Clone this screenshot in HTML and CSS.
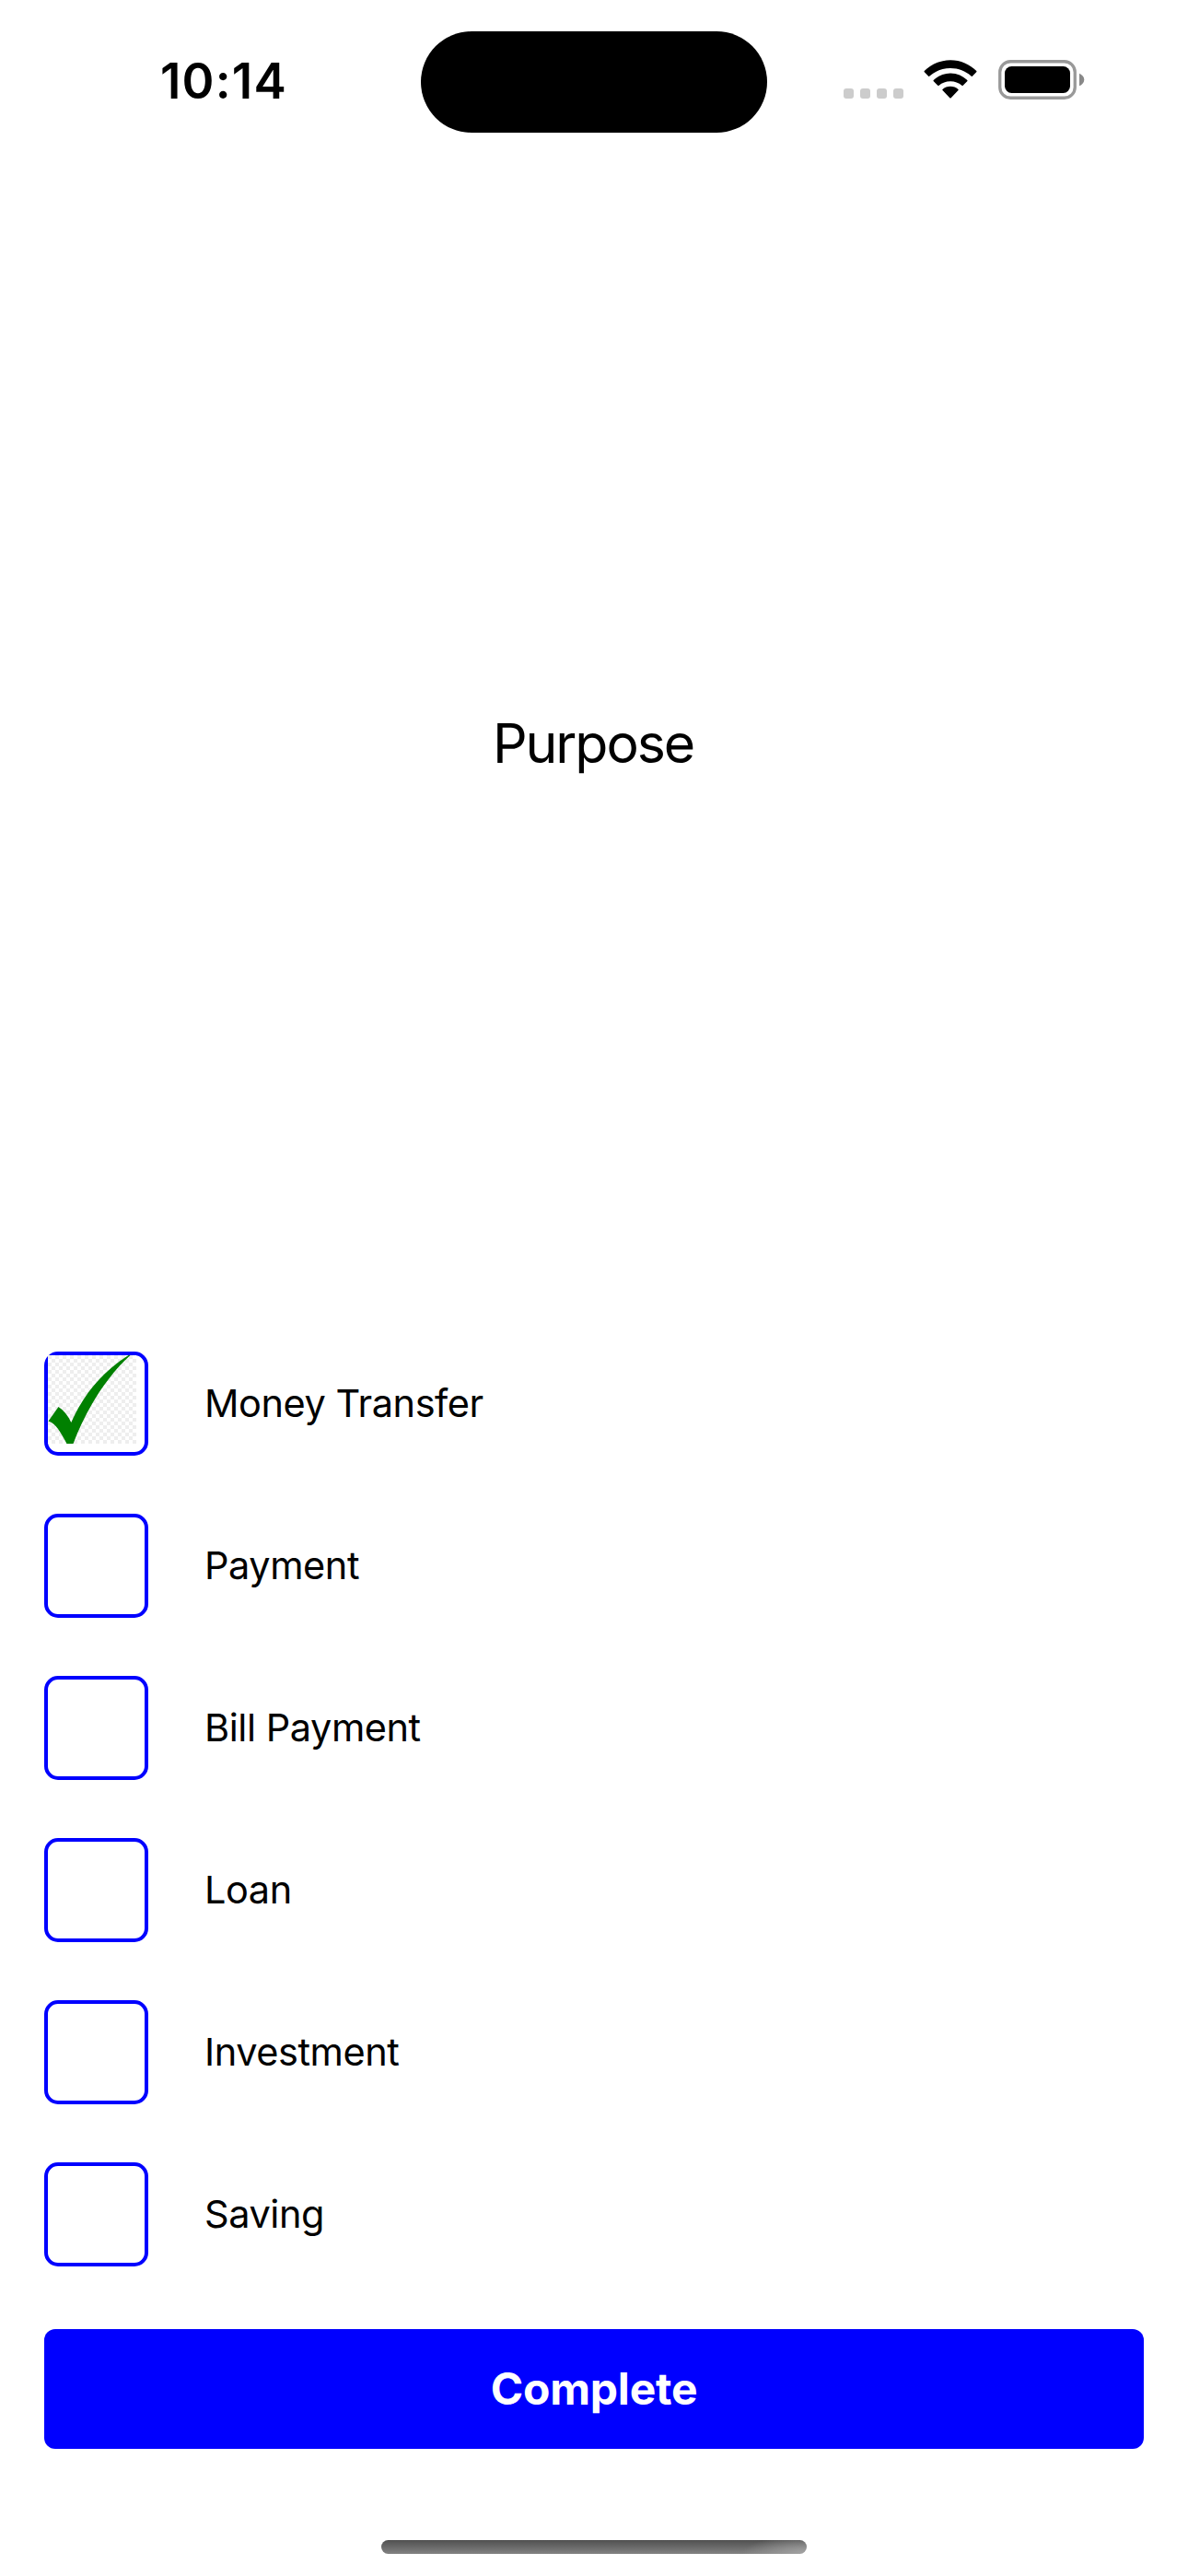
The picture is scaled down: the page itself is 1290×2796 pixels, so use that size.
FILE: index.html
```html
<!DOCTYPE html>
<html lang="en">
<head>
<meta charset="utf-8">
<title>Purpose</title>
<link rel="stylesheet" href="styles.css">
</head>
<body>
<div class="screen">
  <header class="status">
    <div class="time">10:14</div>
    <div class="island"></div>
    <div class="indicators">
      <div class="signal"><i></i><i></i><i></i><i></i></div>
      <svg class="wifi" width="58" height="43" viewBox="0 0 58 43">
        <path d="M29 0.2C40 0.2 50.200 4.800 57.300 12Q57.800 12.700 57.200 13.300L52.800 17.700Q52.200 18.200 51.500 17.600C45.500 12 37.800 9 29 9S12.500 12 6.500 17.600Q5.800 18.200 5.200 17.700L0.800 13.300Q0.200 12.700 0.700 12C7.800 4.800 18 0.200 29 0.200Z"/>
        <path d="M29 14.400C36.300 14.400 42.600 17.300 47.300 22.100Q47.800 22.700 47.200 23.300L42.700 27.800Q42.100 28.400 41.400 27.800C38 24.900 33.800 23.300 29 23.300S20 24.900 16.600 27.800Q15.900 28.400 15.300 27.800L10.800 23.300Q10.200 22.700 10.700 22.100C15.400 17.300 21.700 14.400 29 14.400Z"/>
        <path d="M29 28.700C32.300 28.700 35.200 29.900 37.500 31.900Q38.100 32.500 37.500 33.100L29.700 41.200Q29 41.900 28.300 41.200L20.500 33.100Q19.900 32.500 20.500 31.900C22.800 29.900 25.700 28.700 29 28.700Z"/>
      </svg>
      <svg class="battery" width="95" height="43" viewBox="0 0 95 43">
        <rect x="1.750" y="1.750" width="81.500" height="39.500" rx="11.500" fill="none" stroke="#999" stroke-width="3.300"/>
        <rect x="7" y="7" width="71" height="29" rx="7.500"/>
        <path d="M88 14.700C91 15.900 93.300 18.400 93.300 21.500S91 27.100 88 28.300Z" fill="#888"/>
      </svg>
    </div>
  </header>
  <main class="content">
    <div class="hero"><h1 class="title">Purpose</h1></div>
    <ul class="options">
      <li class="option">
        <span class="box">
          <svg class="check" width="96" height="96" viewBox="0 0 96 96">
            <defs>
              <pattern id="checker" width="8" height="8" patternUnits="userSpaceOnUse">
                <rect width="8" height="8" fill="#fff"/>
                <path d="M0 0h4v4H0zM4 4h4v4H4z" fill="#eee"/>
              </pattern>
            </defs>
            <rect width="96" height="96" fill="url(#checker)"/>
            <path d="M0.500 71.500L11.500 56Q20 61.500 25.300 73C36 49 53 22 87.500 0H89.500C63 24 41 60 27.500 96H20.500C14 84 9 74 0.500 71.500Z" fill="green"/>
          </svg>
        </span>
        <span class="label">Money Transfer</span>
      </li>
      <li class="option"><span class="box"></span><span class="label">Payment</span></li>
      <li class="option"><span class="box"></span><span class="label">Bill Payment</span></li>
      <li class="option"><span class="box"></span><span class="label">Loan</span></li>
      <li class="option"><span class="box"></span><span class="label">Investment</span></li>
      <li class="option"><span class="box"></span><span class="label">Saving</span></li>
    </ul>
    <button class="complete" type="button">Complete</button>
  </main>
  <footer class="home"><div class="bar"></div></footer>
</div>
</body>
</html>
```
FILE: styles.css
```css
* { box-sizing: border-box; }
body { margin: 0; background: #fff; color: #000; font-family: Inter, "Liberation Sans", sans-serif; }
.screen { width: 1290px; height: 2796px; display: flex; flex-direction: column; }
.status { height: 177px; flex: none; display: grid; grid-template-columns: 457px 376px 457px; padding-top: 33.500px; }
.time { padding-left: 174px; font-size: 53px; font-weight: 600; line-height: 109px; letter-spacing: 1.200px; }
.island { height: 110.500px; border-radius: 56px; background: #000; }
.indicators { display: flex; align-items: flex-start; padding: 31.500px 0 0 83px; }
.signal { display: flex; gap: 7px; margin: 31px 22px 0 0; }
.signal i { width: 11px; height: 11px; border-radius: 3px; background: #ccc; }
.wifi { margin-right: 23px; }
.wifi, .battery, .check { display: block; flex: none; }
.content { display: flex; flex-direction: column; height: 2481px; padding: 0 48px; }
.hero { height: 1290px; display: flex; align-items: center; justify-content: center; padding: 0 2px 31px 0; }
.title { margin: 0; font-size: 59px; font-weight: 400; line-height: 72px; letter-spacing: -2.100px; }
.options { list-style: none; margin: 0; padding: 0; display: flex; flex-direction: column; gap: 63px; }
.option { display: flex; align-items: center; gap: 61px; height: 113px; }
.box { width: 113px; height: 113px; flex: none; border: 4px solid #00f; border-radius: 15px; }
.label { font-size: 41.500px; line-height: 50px; letter-spacing: -0.450px; padding-bottom: 2px; }
.complete { flex: none; margin-top: 68px; height: 130px; border: 0; border-radius: 12px; background: #00f; color: #fff; font: 700 48px/58px Inter, sans-serif; letter-spacing: -0.200px; }
.home { flex: 1; display: flex; justify-content: center; padding-top: 99px; }
.bar { width: 462px; height: 15px; border-radius: 8px; background: radial-gradient(ellipse 70px 20px at 100% 100%, #a4a4a4, transparent), linear-gradient(#505050, #828282); }
```
